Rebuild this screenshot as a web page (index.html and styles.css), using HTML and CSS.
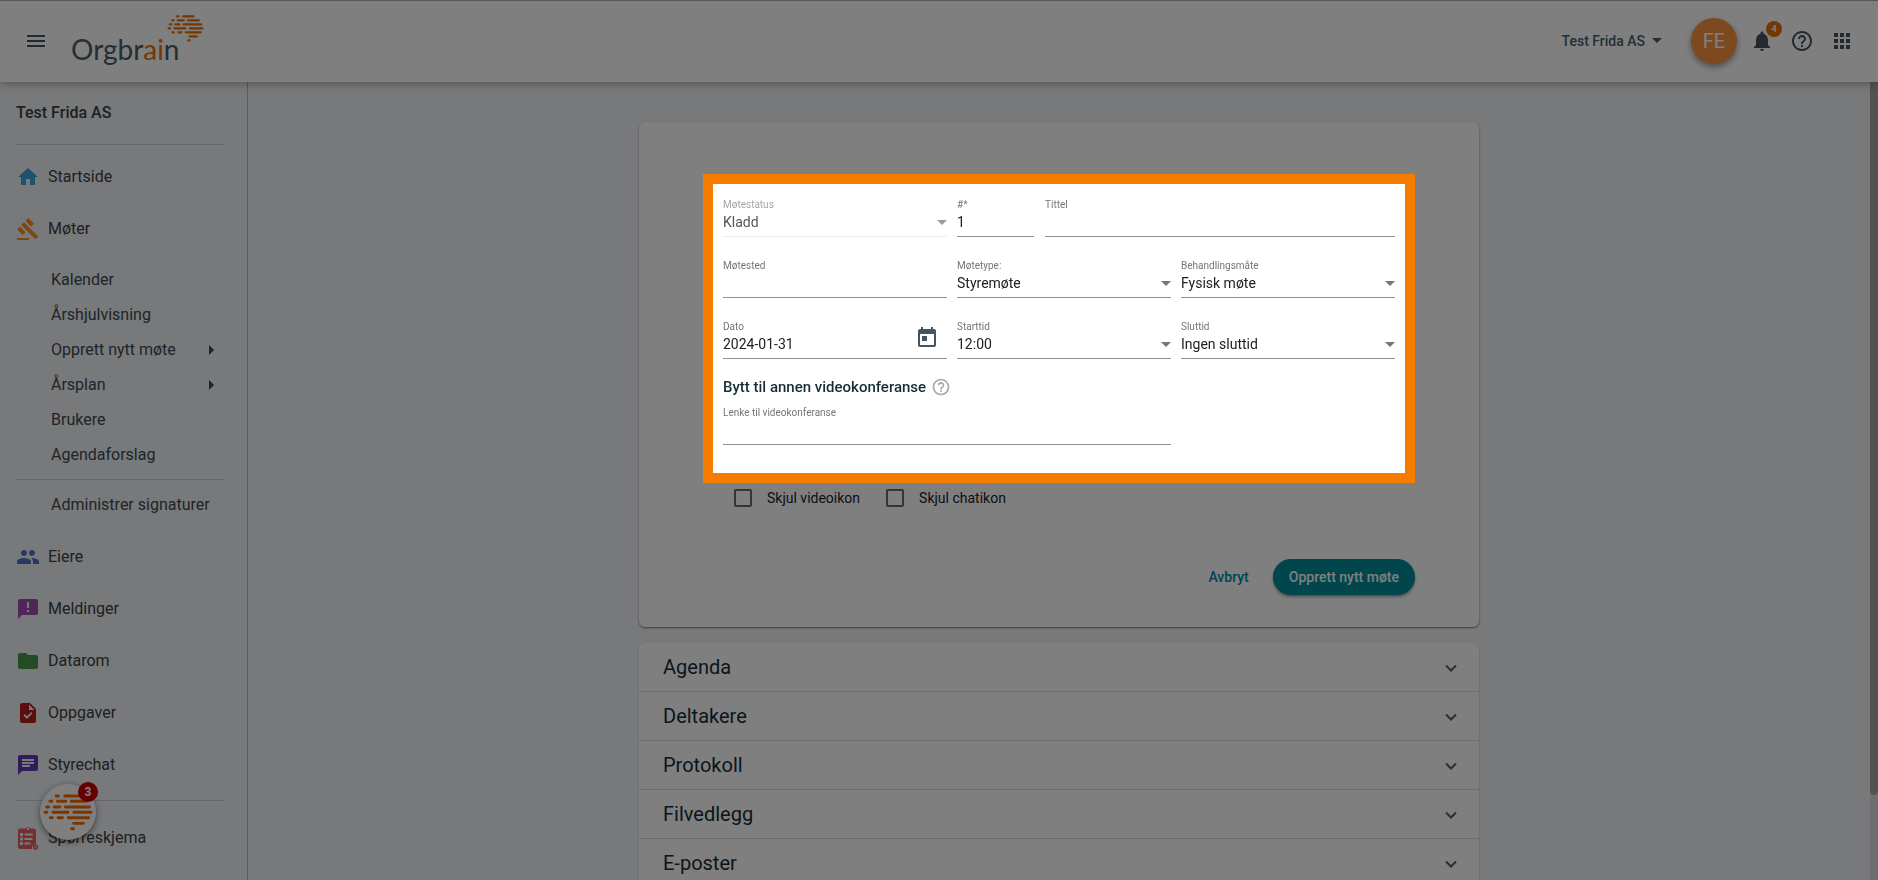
FILE: index.html
```html
<!DOCTYPE html>
<html lang="nb">
<head>
<meta charset="utf-8">
<title>Orgbrain – Opprett nytt møte</title>
<link rel="stylesheet" href="styles.css">
</head>
<body>
<svg class="defs" aria-hidden="true">
  <symbol id="brain" viewBox="128 790 152 112">
    <g stroke="currentColor" stroke-width="9" stroke-linecap="round">
      <path d="M168 796h7M194 796h43M149 812h6M172 812h25M214 812h46M139 829h6M162 829h17M196 829h73M134 845.500h6M158 845.500h46M222 845.500h52M150 862h6M174 862h13M205 862h62M221 879h30M215 895.500h6"/>
    </g>
  </symbol>
  <symbol id="help" viewBox="0 0 24 24"><path d="M11 18h2v-2h-2v2zm1-16C6.480 2 2 6.480 2 12s4.480 10 10 10 10-4.480 10-10S17.520 2 12 2zm0 18c-4.410 0-8-3.590-8-8s3.590-8 8-8 8 3.590 8 8-3.590 8-8 8zm0-14c-2.210 0-4 1.790-4 4h2c0-1.100.9-2 2-2s2 .9 2 2c0 2-3 1.750-3 5h2c0-2.250 3-2.500 3-5 0-2.210-1.790-4-4-4z"/></symbol>
  <symbol id="chevron" viewBox="0 0 24 24"><path d="M7 10.500l5 5 5-5" fill="none" stroke="currentColor" stroke-width="2"/></symbol>
  <symbol id="caret" viewBox="0 0 10 5"><path d="M0 0h10L5 5z"/></symbol>
</svg>

<header class="topbar">
  <button class="icon-btn" aria-label="Meny"><svg class="icon" viewBox="0 0 24 24"><path d="M3 18h18v-2H3v2zm0-5h18v-2H3v2zm0-7v2h18V6H3z"/></svg></button>
  <a class="logo" href="#"><span class="logo-text">Orgbr<span class="logo-accent">ai</span>n</span><svg class="logo-brain"><use href="#brain"/></svg></a>
  <div class="tools">
    <button class="org-switch">Test Frida AS<svg class="caret"><use href="#caret"/></svg></button>
    <button class="avatar">FE</button>
    <div class="tool-icons">
      <button class="icon-btn bell" aria-label="Varsler"><svg class="icon" viewBox="0 0 24 24"><path d="M12 22c1.100 0 2-.9 2-2h-4c0 1.100.9 2 2 2zm6-6v-5c0-3.070-1.630-5.640-4.500-6.320V4c0-.83-.67-1.500-1.500-1.500s-1.500.67-1.500 1.500v.68C7.640 5.360 6 7.920 6 11v5l-2 2v1h16v-1l-2-2z"/></svg><span class="bell-badge">4</span></button>
      <button class="icon-btn" aria-label="Hjelp"><svg class="icon"><use href="#help"/></svg></button>
      <button class="icon-btn" aria-label="Apper"><svg class="icon" viewBox="0 0 24 24"><path d="M4 8h4V4H4v4zm6 12h4v-4h-4v4zm-6 0h4v-4H4v4zm0-6h4v-4H4v4zm6 0h4v-4h-4v4zm6-10v4h4V4h-4zm-6 4h4V4h-4v4zm6 6h4v-4h-4v4zm0 6h4v-4h-4v4z"/></svg></button>
    </div>
  </div>
</header>

<div class="shell">
  <nav class="sidebar">
    <h2 class="side-title">Test Frida AS</h2>
    <hr class="rule">
    <a class="nav-item" href="#"><svg class="icon home" viewBox="0 0 24 24"><path d="M10 20v-6h4v6h5v-8h3L12 3 2 12h3v8z"/></svg>Startside</a>
    <a class="nav-item" href="#"><svg class="icon gavel" viewBox="0 0 24 24"><path d="M1 21h12v2H1v-2zM5.240 8.070l2.830-2.830 14.140 14.140-2.830 2.830L5.240 8.070zM12.320 1l5.660 5.660-2.830 2.830-5.660-5.660L12.320 1zM3.830 9.480l5.660 5.660-2.830 2.830L1 12.310l2.830-2.830z"/></svg>Møter</a>
    <div class="subnav">
      <a class="sub-item" href="#">Kalender</a>
      <a class="sub-item" href="#">Årshjulvisning</a>
      <a class="sub-item" href="#">Opprett nytt møte<svg class="more" viewBox="0 0 5 10"><path d="M0 0l5 5-5 5z"/></svg></a>
      <a class="sub-item" href="#">Årsplan<svg class="more" viewBox="0 0 5 10"><path d="M0 0l5 5-5 5z"/></svg></a>
      <a class="sub-item" href="#">Brukere</a>
      <a class="sub-item" href="#">Agendaforslag</a>
    </div>
    <hr class="rule">
    <div class="subnav">
      <a class="sub-item" href="#">Administrer signaturer</a>
    </div>
    <a class="nav-item" href="#"><svg class="icon people" viewBox="0 0 24 24"><path d="M16 11c1.660 0 2.990-1.340 2.990-3S17.660 5 16 5s-3 1.340-3 3 1.340 3 3 3zm-8 0c1.660 0 2.990-1.340 2.990-3S9.660 5 8 5 5 6.340 5 8s1.340 3 3 3zm0 2c-2.330 0-7 1.170-7 3.500V19h14v-2.500c0-2.330-4.670-3.500-7-3.500zm8 0c-.29 0-.62.020-.97.050 1.160.84 1.970 1.970 1.970 3.450V19h6v-2.500c0-2.330-4.670-3.500-7-3.500z"/></svg>Eiere</a>
    <a class="nav-item" href="#"><svg class="icon message" viewBox="0 0 24 24"><path d="M20 2H4c-1.100 0-2 .9-2 2v18l4-4h14c1.100 0 2-.9 2-2V4c0-1.100-.9-2-2-2z"/><path class="ink" d="M11 5h2v6h-2zM11 13h2v2h-2z"/></svg>Meldinger</a>
    <a class="nav-item" href="#"><svg class="icon folder" viewBox="0 0 24 24"><path d="M10 4H4c-1.100 0-2 .9-2 2v12c0 1.100.9 2 2 2h16c1.100 0 2-.9 2-2V8c0-1.100-.9-2-2-2h-8l-2-2z"/></svg>Datarom</a>
    <a class="nav-item" href="#"><svg class="icon task" viewBox="0 0 24 24"><path d="M14 2H6c-1.100 0-2 .9-2 2v16c0 1.100.9 2 2 2h12c1.100 0 2-.9 2-2V8l-6-6z"/><path class="ink" d="M13 9V3.500L18.500 9zM10.940 18l-3.540-3.540 1.410-1.410 2.120 2.120 4.240-4.240 1.410 1.410L10.940 18z"/></svg>Oppgaver</a>
    <a class="nav-item" href="#"><svg class="icon chat" viewBox="0 0 24 24"><path d="M20 2H4c-1.100 0-2 .9-2 2v18l4-4h14c1.100 0 2-.9 2-2V4c0-1.100-.9-2-2-2z"/><path class="ink" d="M6 6h12v2H6zM6 9h12v2H6zM6 12h8v2H6z"/></svg>Styrechat</a>
    <hr class="rule rule-wide">
    <a class="nav-item" href="#"><svg class="icon survey" viewBox="0 0 24 24"><path d="M18 2.500h-3.500a3 3 0 0 0-5 0H4a2 2 0 0 0-2 2V21a2 2 0 0 0 2 2h12a4 4 0 0 1 4-5V4.500a2 2 0 0 0-2-2z"/><circle cx="19.500" cy="21" r="2.700"/><path class="ink" d="M11 2h2v2h-2zM4 7h3v3H4zM8.500 7.500h8v2h-8zM4 11.500h3v3H4zM8.500 12h8v2h-8zM4 16h3v3H4zM8.500 16.500h6v2h-6zM18 21l1 1.500 2.500-2.500-.5-.5-2 2-.6-.8z"/></svg>Spørreskjema</a>
  </nav>

  <main class="content">
    <form class="card">
      <div class="spotlight">
        <div class="fields">
          <div class="field disabled">
            <label for="status">Møtestatus</label>
            <div class="pick"><select id="status" disabled><option>Kladd</option></select><svg class="caret"><use href="#caret"/></svg></div>
          </div>
          <div class="title-row">
            <div class="field"><label for="nr">#*</label><input id="nr" type="text" value="1"></div>
            <div class="field"><label for="title">Tittel</label><input id="title" type="text"></div>
          </div>
          <div class="field"><label for="place">Møtested</label><input id="place" type="text"></div>
          <div class="field">
            <label for="type">Møtetype:</label>
            <div class="pick"><select id="type"><option>Styremøte</option></select><svg class="caret"><use href="#caret"/></svg></div>
          </div>
          <div class="field">
            <label for="mode">Behandlingsmåte</label>
            <div class="pick"><select id="mode"><option>Fysisk møte</option></select><svg class="caret"><use href="#caret"/></svg></div>
          </div>
          <div class="field date-field">
            <div class="date-text"><label for="date">Dato</label><input id="date" type="text" value="2024-01-31"></div>
            <button type="button" class="icon-btn" aria-label="Velg dato"><svg class="icon" viewBox="0 0 24 24"><path d="M19 3h-1V1h-2v2H8V1H6v2H5c-1.110 0-1.990.9-1.990 2L3 19c0 1.100.89 2 2 2h14c1.100 0 2-.9 2-2V5c0-1.100-.9-2-2-2zm0 16H5V8h14v11zM7 10h5v5H7z"/></svg></button>
          </div>
          <div class="field">
            <label for="start">Starttid</label>
            <div class="pick"><select id="start"><option>12:00</option></select><svg class="caret"><use href="#caret"/></svg></div>
          </div>
          <div class="field">
            <label for="end">Sluttid</label>
            <div class="pick"><select id="end"><option>Ingen sluttid</option></select><svg class="caret"><use href="#caret"/></svg></div>
          </div>
        </div>
        <h3 class="video-head">Bytt til annen videokonferanse<svg class="hint"><use href="#help"/></svg></h3>
        <div class="fields">
          <div class="field link-field"><label for="link">Lenke til videokonferanse</label><input id="link" type="text"></div>
        </div>
      </div>
      <div class="checks">
        <label class="check"><input type="checkbox">Skjul videoikon</label>
        <label class="check"><input type="checkbox">Skjul chatikon</label>
      </div>
      <div class="actions">
        <button type="button" class="btn-text">Avbryt</button>
        <button type="button" class="btn-main">Opprett nytt møte</button>
      </div>
    </form>
    <div class="accordion">
      <button class="panel">Agenda<svg class="icon"><use href="#chevron"/></svg></button>
      <button class="panel">Deltakere<svg class="icon"><use href="#chevron"/></svg></button>
      <button class="panel">Protokoll<svg class="icon"><use href="#chevron"/></svg></button>
      <button class="panel">Filvedlegg<svg class="icon"><use href="#chevron"/></svg></button>
      <button class="panel">E-poster<svg class="icon"><use href="#chevron"/></svg></button>
    </div>
  </main>
  <div class="scroll-track"><div class="scroll-thumb"></div></div>
</div>

<button class="assistant" aria-label="Assistent"><svg class="assistant-brain"><use href="#brain"/></svg><span class="assistant-badge">3</span></button>
</body>
</html>
```
FILE: styles.css
```css
* { box-sizing: border-box; }
body {
  margin: 0;
  height: 100vh;
  display: flex;
  flex-direction: column;
  overflow: hidden;
  background: #f0f2f6;
  color: #212121;
  font: 14px/20px Roboto, sans-serif;
}
button, input, select { font: inherit; color: inherit; }
button { border: 0; padding: 0; background: none; cursor: pointer; }
a { color: inherit; text-decoration: none; }
.defs { display: none; }
.icon { display: block; flex: none; width: 24px; height: 24px; fill: currentColor; }
.icon-btn { color: #455560; }
.caret { width: 10px; height: 5px; fill: currentColor; }

.topbar {
  position: relative;
  z-index: 2;
  flex: none;
  display: flex;
  align-items: center;
  height: 82px;
  padding: 0 24px 2px;
  background: #fff;
  border-top: 1px solid #b0b0b0;
  box-shadow: 0 2px 8px rgba(0, 0, 0, .3);
}
.logo { display: flex; margin-left: 23px; position: relative; }
.logo-text { font: 400 28px/40px Lato, sans-serif; color: #455f6e; padding-top: 16px; }
.logo-accent { color: #e87000; }
.logo-brain { position: absolute; left: 96px; top: 2px; width: 37px; height: 27px; color: #e87000; }
.tools { margin-left: auto; display: flex; align-items: center; }
.org-switch { display: flex; align-items: center; gap: 7px; font-weight: 500; color: #455f6e; }
.avatar {
  width: 46px;
  height: 46px;
  margin: 0 13px 0 29px;
  border-radius: 50%;
  background: #fb9540;
  color: #fff;
  font-size: 20px;
  box-shadow: 0 3px 6px rgba(0, 0, 0, .4);
}
.tool-icons { display: flex; gap: 16px; }
.bell { position: relative; }
.bell-badge {
  position: absolute;
  top: -8px;
  right: -8px;
  width: 16px;
  height: 16px;
  border-radius: 50%;
  background: #e87000;
  color: #fff;
  font-weight: 700;
  font-size: 9px;
  line-height: 16px;
}

.shell { flex: 1; min-height: 0; display: grid; grid-template-columns: 248px 1fr 8px; }
.sidebar { border-right: 1px solid #b4b6ba; font-size: 16px; color: #3c4043; }
.side-title { margin: 0 16px; font-size: 16px; font-weight: 500; line-height: 62px; }
.rule { margin: 0 22px 6px 16px; border: 0; border-top: 1px solid #cfd0d3; }
.subnav + .rule { margin-top: 7px; }
.rule-wide { margin: 9px 22px 11px 16px; }
.nav-item { display: flex; align-items: center; gap: 8px; height: 52px; padding-left: 16px; }
.subnav { padding: 7px 33px 0 51px; }
.rule + .subnav { padding: 1px 33px 9px 51px; }
.sub-item { display: flex; align-items: center; justify-content: space-between; height: 35px; color: #3c4a52; white-space: nowrap; }
.more { width: 5px; height: 10px; fill: currentColor; }
.home { color: #3fa5da; }
.gavel { color: #fb8c1a; }
.people { color: #5472c8; }
.message { color: #a04bae; }
.folder { color: #43984a; }
.task { color: #b71c1c; }
.chat { color: #6038b0; }
.survey { color: #e56060; }
.ink { fill: #f0f2f6; }

.content { display: flex; flex-direction: column; align-items: center; gap: 16px; padding-top: 40px; min-height: 0; }
.card {
  flex: none;
  width: 840px;
  max-width: 100%;
  padding: 52px 64px 32px;
  border-radius: 6px;
  background: #fff;
  box-shadow: 0 1px 2px rgba(0, 0, 0, .5);
}
/* Tour step: bright frame, everything outside it is dimmed. */
.spotlight {
  position: relative;
  z-index: 10;
  padding: 10px 10px 28px;
  border: 10px solid #f67c00;
  background: #fff;
  box-shadow: 0 0 0 100vmax rgba(0, 0, 0, .5);
}
.fields { display: grid; grid-template-columns: 224fr 214fr 214fr; gap: 18px 10px; }
.title-row { grid-column: span 2; display: grid; grid-template-columns: 77px 1fr; gap: 11px; }
.field { display: flex; flex-direction: column; padding: 3px 0 5px; border-bottom: 1px solid #8f8f8f; min-width: 0; }
.field label { font-size: 10px; line-height: 16px; color: #757575; }
.field input, .field select {
  display: block;
  width: 100%;
  height: 18px;
  line-height: 18px;
  padding: 0;
  border: 0;
  border-radius: 0;
  outline: 0;
  background: none;
  appearance: none;
}
.pick { display: grid; align-items: center; color: #212121; }
.pick > * { grid-area: 1 / 1; }
.pick .caret { justify-self: end; color: #757575; pointer-events: none; }
.disabled { border-color: #ececec; }
.disabled label { color: #a6a6a6; }
.disabled select { color: #555; opacity: 1; }
.disabled .caret { color: #9c9c9c; }
.date-field { flex-direction: row; align-items: center; padding-right: 8px; }
.date-field .icon-btn { padding-top: 3px; }
.date-text { flex: 1; display: flex; flex-direction: column; }
.link-field { grid-column: span 2; }
.video-head { display: flex; align-items: center; gap: 5px; margin: 16px 0 3px; font-size: 15px; line-height: 24px; font-weight: 500; color: #142d39; }
.hint { width: 20px; height: 20px; fill: #a3a9ad; }

.checks { display: flex; gap: 26px; padding: 6px 31px 0; }
.check { display: flex; align-items: center; gap: 15px; line-height: 18px; }
.check input { appearance: none; width: 18px; height: 18px; margin: 0; border: 2px solid #6a6a6a; border-radius: 2px; }
.actions { display: flex; justify-content: flex-end; align-items: center; gap: 24px; margin-top: 52px; font-weight: 500; }
.btn-text { color: #008c99; }
.btn-main { height: 36px; padding: 0 16px; border-radius: 18px; background: #008c99; color: #fff; box-shadow: 0 2px 3px rgba(0, 0, 0, .4); }

.accordion { flex: none; width: 840px; max-width: 100%; border-radius: 6px; background: #fff; box-shadow: 0 1px 2px rgba(0, 0, 0, .2); }
.panel {
  display: flex;
  align-items: center;
  justify-content: space-between;
  width: 100%;
  height: 49px;
  padding: 0 16px 0 24px;
  border-bottom: 1px solid #dcdcdc;
  font-size: 20px;
  color: #142d39;
}
.panel .icon { color: #5a5a5a; }

.scroll-track { background: #dcdde0; }
.scroll-thumb { height: calc(100% - 85px); border-radius: 0 0 4px 4px; background: #a4a4a4; }

.assistant {
  position: fixed;
  left: 40px;
  bottom: 40px;
  z-index: 3;
  display: grid;
  place-items: center;
  width: 56px;
  height: 56px;
  border-radius: 50%;
  background: #fff;
  box-shadow: 0 2px 6px rgba(0, 0, 0, .5);
}
.assistant-brain { width: 50px; height: 37px; color: #f56c00; }
.assistant-badge {
  position: absolute;
  top: -2px;
  right: -2px;
  width: 20px;
  height: 20px;
  border-radius: 50%;
  background: #c80000;
  color: #fff;
  font-size: 12px;
  font-weight: 700;
  line-height: 20px;
}
```
